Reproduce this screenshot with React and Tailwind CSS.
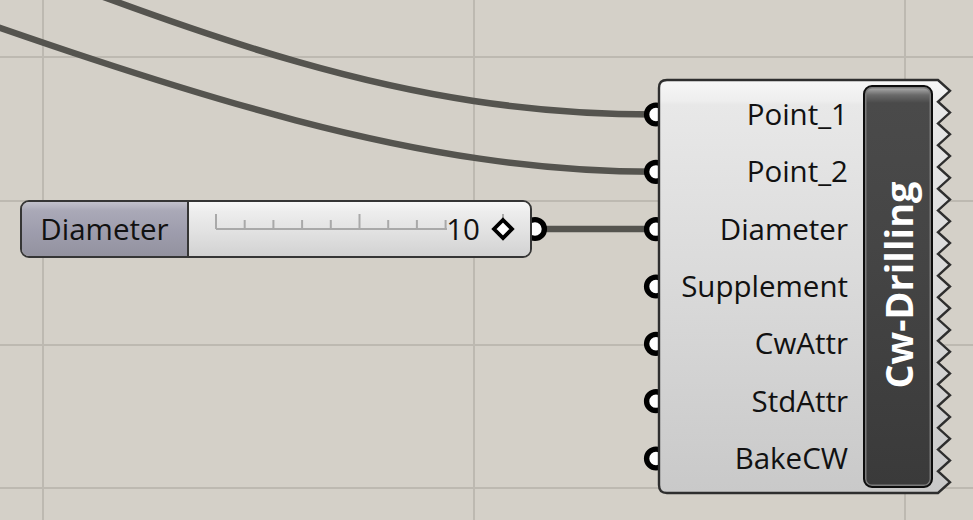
const INPUTS = ['Point_1', 'Point_2', 'Diameter', 'Supplement', 'CwAttr', 'StdAttr', 'BakeCW'];
const ROW_H = 57.33;
const PORT_Y = INPUTS.map((_, i) => 114.5 + i * ROW_H);
const WIRE = '#55544f';

// outline of the component body, with the zigzag output edge on the right
function bodyPath() {
  const top = 2, bottom = 415, inner = 281, outer = 293, teeth = 19;
  const step = (bottom - top) / teeth;
  let d = `M 10 ${top} L ${inner} ${top}`;
  for (let i = 0; i < teeth; i++) {
    const y = top + i * step;
    d += ` L ${outer} ${y + step / 2} L ${inner} ${y + step}`;
  }
  d += ` L 10 ${bottom} Q 2 ${bottom} 2 ${bottom - 8} L 2 10 Q 2 2 10 2 Z`;
  return d;
}

function Port({ x, y }) {
  return <circle cx={x} cy={y} r="9.4" fill="#fff" stroke="#000" strokeWidth="5.4" />;
}

function Wires() {
  return (
    <svg className="absolute inset-0" width="973" height="520">
      <g stroke="#bdb9b1" strokeWidth="2">
        <line x1="43" y1="0" x2="43" y2="520" />
        <line x1="474" y1="0" x2="474" y2="520" />
        <line x1="905" y1="0" x2="905" y2="520" />
        <line x1="0" y1="57" x2="973" y2="57" />
        <line x1="0" y1="201" x2="973" y2="201" />
        <line x1="0" y1="345" x2="973" y2="345" />
        <line x1="0" y1="488" x2="973" y2="488" />
      </g>
      <g stroke={WIRE} strokeWidth="6.5" fill="none">
        <path d="M -110 -85 C 210 40, 400 114.5, 656 114.5" />
        <path d="M -150 -25 C 200 100, 420 171.8, 656 171.8" />
        <path d="M 535 229 L 656 229" />
      </g>
      <Port x={535} y={229} />
      {PORT_Y.map((y) => (
        <Port key={y} x={656} y={y} />
      ))}
    </svg>
  );
}

function Slider() {
  const ticks = [];
  for (let k = 0; k <= 10; k++) {
    if (k === 9) continue;
    const x = 27 + k * 28.7;
    const major = k % 5 === 0;
    ticks.push(<line key={k} x1={x} y1={major ? 12 : 18} x2={x} y2="27" />);
  }
  return (
    <div className="absolute left-[20px] top-[200px] w-[512px] h-[58px] flex rounded-[9px] border-2 border-[#353535] overflow-hidden text-[29.5px] text-[#111]">
      <div className="w-[167px] border-r-2 border-[#353535] flex items-center justify-center bg-[linear-gradient(to_bottom,#c2c1cc_0%,#aaa9b7_16%,#9e9dad_55%,#93929f_100%)]">
        Diameter
      </div>
      <div className="relative flex-1 flex items-center justify-end pr-[50px] bg-[linear-gradient(to_bottom,#f8f8f8_0%,#ededed_18%,#e0e0e0_60%,#d2d2d2_100%)]">
        <svg className="absolute inset-0" width="341" height="54">
          <g stroke="#a9a9a9" strokeWidth="2">
            <line x1="27" y1="27" x2="258" y2="27" />
            {ticks}
          </g>
          <path d="M 314 18 L 323 27 L 314 36 L 305 27 Z" fill="#fff" stroke="#000" strokeWidth="3.8" strokeLinejoin="miter" />
        </svg>
        <span className="relative">10</span>
      </div>
    </div>
  );
}

function Component() {
  return (
    <div className="absolute left-[657px] top-[78px] w-[296px] h-[417px]">
      <svg className="absolute inset-0" width="296" height="417">
        <defs>
          <linearGradient id="body" x1="0" y1="0" x2="0" y2="1">
            <stop offset="0" stopColor="#f7f7f7" />
            <stop offset="0.05" stopColor="#eeeeee" />
            <stop offset="0.06" stopColor="#e8e8e8" />
            <stop offset="1" stopColor="#c9c9c9" />
          </linearGradient>
        </defs>
        <path d={bodyPath()} fill="url(#body)" stroke="#2e2e2e" strokeWidth="2.4" strokeLinejoin="miter" />
      </svg>
      <div className="relative flex pt-[7px] pr-[20px] text-[29.5px] text-[#111]">
        <div className="flex-1 flex flex-col items-end pr-[15px]">
          {INPUTS.map((name) => (
            <div key={name} className="h-[57.33px] leading-[57.33px] whitespace-nowrap">
              {name}
            </div>
          ))}
        </div>
        <div className="w-[70px] h-[403px] flex items-center justify-center rounded-[9px] border-2 border-[#0d0d0d] shadow-[inset_0_0_0_1.5px_#7a7a7a] bg-[linear-gradient(to_bottom,#b4b4b4_0%,#6a6a6a_2%,#4a4a4a_4%,#454545_40%,#3a3a3a_100%)]">
          <span className="-rotate-90 -translate-y-[2px] whitespace-nowrap text-white font-bold text-[38px] leading-none">
            Cw-Drilling
          </span>
        </div>
      </div>
    </div>
  );
}

export default function App() {
  return (
    <div className="relative w-[973px] h-[520px] overflow-hidden bg-[#d4d0c8] font-['Open_Sans',sans-serif]">
      <Wires />
      <Slider />
      <Component />
    </div>
  );
}
